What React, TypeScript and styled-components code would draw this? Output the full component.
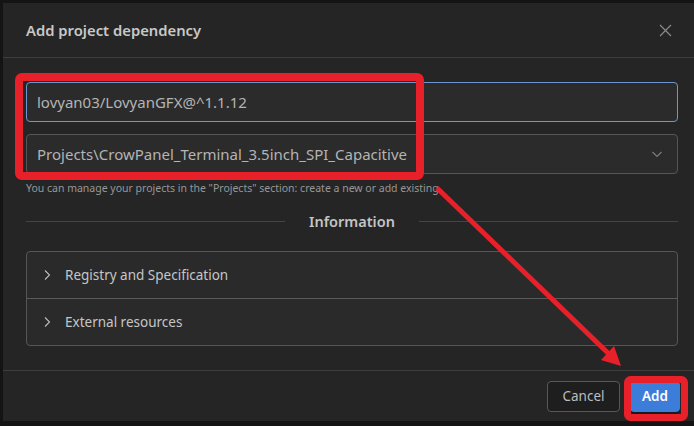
import React from "react";
import styled, { createGlobalStyle } from "styled-components";

const GlobalStyle = createGlobalStyle`
  html, body {
    margin: 0;
    padding: 0;
    background: #141414;
    overflow: hidden;
  }
  body {
    font-family: "Noto Sans", "Open Sans", sans-serif;
  }
`;

const Page = styled.div`
  position: relative;
  width: 694px;
  height: 426px;
  overflow: hidden;
  padding: 3px 0 0 3px;
  box-sizing: border-box;
  background: #141414;
`;

const Dialog = styled.div`
  width: 698px;
  height: 418px;
  background: #252526;
  display: flex;
  flex-direction: column;
  box-sizing: border-box;
`;

const Header = styled.div`
  height: 54px;
  flex: none;
  display: flex;
  align-items: center;
  justify-content: space-between;
  padding: 0 24px 0 23px;
  border-bottom: 1px solid #3e3e3e;
`;

const Title = styled.h2`
  margin: 0;
  font-size: 14.8px;
  font-weight: 600;
  color: #c8c8c8;
`;

const Close = styled.button`
  background: none;
  border: none;
  padding: 0;
  width: 16px;
  height: 16px;
  margin-right: 4px;
  display: flex;
  align-items: center;
  justify-content: center;
`;

const Body = styled.div`
  flex: 1;
  padding: 24px 23px 0;
  display: flex;
  flex-direction: column;
  border-bottom: 1px solid #3e3e3e;
`;

const Field = styled.div<{ focused?: boolean }>`
  height: 40px;
  box-sizing: border-box;
  border: 1px solid ${(p) => (p.focused ? "#6f95cf" : "#565656")};
  border-radius: 4px;
  background: #2b2b2b;
  display: flex;
  align-items: center;
  justify-content: space-between;
  padding: 0 14px 0 10px;
  font-size: 15px;
  color: #b4b4b4;
  & + & {
    margin-top: 12px;
  }
`;

const Help = styled.div`
  margin-top: 7px;
  font-size: 10.5px;
  color: #979797;
  line-height: 14px;
`;

const Divider = styled.div`
  margin-top: 16px;
  display: flex;
  align-items: center;
  gap: 24px;
  &::before,
  &::after {
    content: "";
    flex: 1;
    height: 1px;
    background: #444;
  }
`;

const DividerLabel = styled.span`
  font-size: 14.5px;
  font-weight: 600;
  color: #c4c4c4;
`;

const Accordion = styled.div`
  margin-top: 20px;
  border: 1px solid #565656;
  border-radius: 4px;
  background: #2a2a2b;
`;

const AccordionRow = styled.div`
  height: 46px;
  display: flex;
  align-items: center;
  padding-left: 14px;
  gap: 12px;
  font-size: 13.5px;
  color: #c6c6c6;
  & + & {
    border-top: 1px solid #5a5a5a;
  }
`;

const Footer = styled.div`
  height: 50px;
  flex: none;
  display: flex;
  align-items: center;
  justify-content: flex-end;
  gap: 10px;
  padding-right: 21px;
`;

const Button = styled.button<{ primary?: boolean }>`
  height: 31px;
  width: ${(p) => (p.primary ? 50 : 73)}px;
  flex: none;
  box-sizing: border-box;
  border-radius: 4px;
  font-family: inherit;
  font-size: 13.5px;
  font-weight: ${(p) => (p.primary ? 600 : 400)};
  padding: 0;
  color: ${(p) => (p.primary ? "#ffffff" : "#bdbdbd")};
  background: ${(p) => (p.primary ? "#3c7dd9" : "#1e1e1e")};
  border: 1px solid ${(p) => (p.primary ? "#3c7dd9" : "#585858")};
  box-shadow: ${(p) => (p.primary ? "0 2px 0 #1a1a1a" : "none")};
`;

const Marks = styled.svg`
  position: absolute;
  left: 0;
  top: 0;
  pointer-events: none;
`;

const Chevron = ({ dir }: { dir: "down" | "right" }) => (
  <svg width="12" height="12" viewBox="0 0 12 12" fill="none" stroke={dir === "down" ? "#7d7d7d" : "#bdbdbd"} strokeWidth="1.1">
    {dir === "down" ? <path d="M1.5 4 L6 8.5 L10.5 4" /> : <path d="M4 1.5 L8.5 6 L4 10.5" />}
  </svg>
);

export default function App() {
  return (
    <>
      <GlobalStyle />
      <Page>
        <Dialog>
          <Header>
            <Title>Add project dependency</Title>
            <Close aria-label="close">
              <svg width="13" height="13" viewBox="0 0 13 13" stroke="#8a8a8a" strokeWidth="1.2">
                <path d="M1 1 L12 12 M12 1 L1 12" />
              </svg>
            </Close>
          </Header>
          <Body>
            <Field focused>lovyan03/LovyanGFX@^1.1.12</Field>
            <Field>
              <span>Projects\CrowPanel_Terminal_3.5inch_SPI_Capacitive</span>
              <Chevron dir="down" />
            </Field>
            <Help>You can manage your projects in the "Projects" section: create a new or add existing</Help>
            <Divider>
              <DividerLabel>Information</DividerLabel>
            </Divider>
            <Accordion>
              <AccordionRow>
                <Chevron dir="right" />
                Registry and Specification
              </AccordionRow>
              <AccordionRow>
                <Chevron dir="right" />
                External resources
              </AccordionRow>
            </Accordion>
          </Body>
          <Footer>
            <Button>Cancel</Button>
            <Button primary>Add</Button>
          </Footer>
        </Dialog>
        <Marks width="694" height="426" viewBox="0 0 694 426">
          <g fill="none" stroke="#e8202a" strokeWidth="8" strokeLinejoin="round">
            <rect x="19" y="77" width="401" height="99" rx="3" />
            <rect x="627.5" y="379.5" width="57" height="38" rx="3" strokeWidth="7" />
          </g>
          <line x1="437" y1="188" x2="610" y2="355" stroke="#e8202a" strokeWidth="5" />
          <polygon points="621,366 601,360 614,346" fill="#e8202a" />
        </Marks>
      </Page>
    </>
  );
}
